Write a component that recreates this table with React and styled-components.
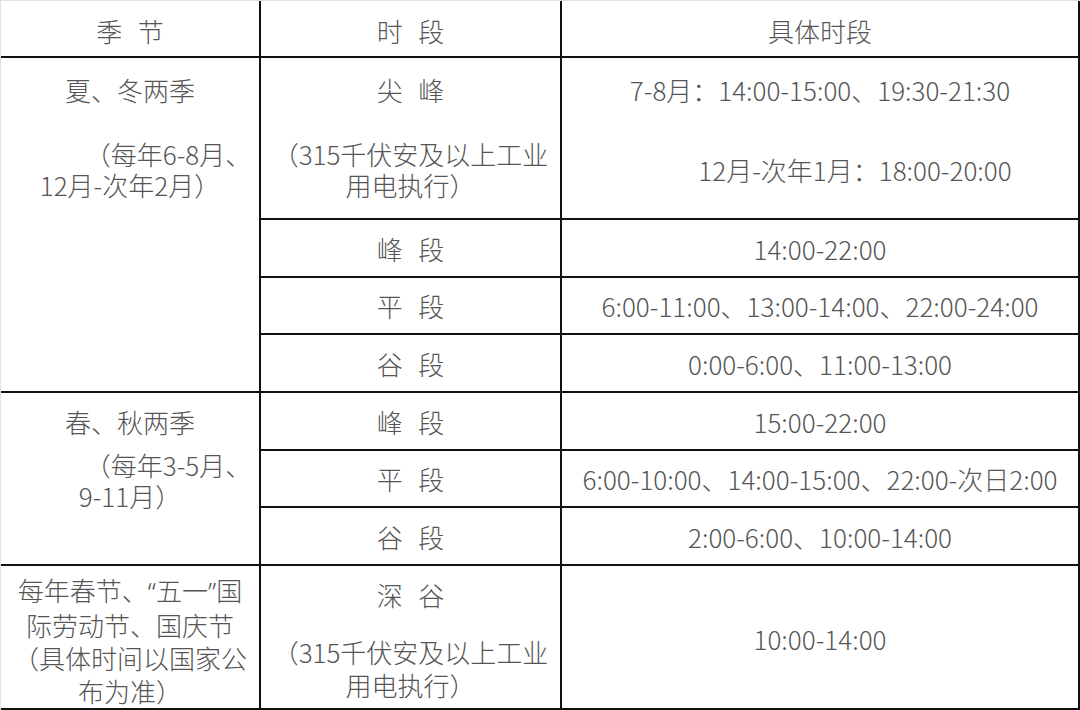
import React from 'react';
import styled, { createGlobalStyle } from 'styled-components';

const Global = createGlobalStyle`
  html, body { margin: 0; padding: 0; background: #fff; }
  body { font-family: "Noto Sans CJK SC", "Noto Sans", sans-serif; }
`;

const Grid = styled.div`
  display: grid;
  grid-template-columns: 258px 299px 516px;
  grid-template-rows: 55px 160px 56px 55px 56px 56px 55px 56px 142px;
  gap: 2px;
  width: 1080px;
  height: 710px;
  box-sizing: border-box;
  background: #111;
  border-top: 1px solid #e2e2e2;
  border-left: 1px solid #e2e2e2;
  padding: 0 2px 2px 0;
  font-family: "Noto Sans CJK SC", sans-serif;
  font-weight: 300;
  font-size: 26px;
  line-height: 31px;
  color: #555;
`;

const Cell = styled.div`
  grid-column: ${(p) => p.$col};
  grid-row: ${(p) => p.$row} / span ${(p) => p.$span || 1};
  background: #fff;
  display: flex;
  flex-direction: column;
  justify-content: ${(p) => (p.$top ? 'flex-start' : 'center')};
  text-align: center;
  padding-top: ${(p) => p.$pt || 0}px;
  line-height: ${(p) => p.$lh || 31}px;
  box-sizing: border-box;
  min-width: 0;
  overflow: hidden;
`;

const Line = styled.div`
  margin-top: ${(p) => p.$mt || 0}px;
  padding-left: ${(p) => p.$shift || 0}px;
  white-space: nowrap;
`;

const Spaced = styled.span`
  word-spacing: 10px;
`;

const Quote = styled.span`
  font-family: "Noto Sans", "Liberation Sans", sans-serif;
  font-weight: 300;
`;

const single = [
  { row: 3, name: '峰 段', time: '14:00-22:00' },
  { row: 4, name: '平 段', time: '6:00-11:00、13:00-14:00、22:00-24:00' },
  { row: 5, name: '谷 段', time: '0:00-6:00、11:00-13:00' },
  { row: 6, name: '峰 段', time: '15:00-22:00' },
  { row: 7, name: '平 段', time: '6:00-10:00、14:00-15:00、22:00-次日2:00' },
  { row: 8, name: '谷 段', time: '2:00-6:00、10:00-14:00' },
];

export default function App() {
  return (
    <>
      <Global />
      <Grid>
        <Cell $col={1} $row={1} $pt={3}>
          <Line><Spaced>季 节</Spaced></Line>
        </Cell>
        <Cell $col={2} $row={1} $pt={3}>
          <Line><Spaced>时 段</Spaced></Line>
        </Cell>
        <Cell $col={3} $row={1} $pt={3}>
          <Line>具体时段</Line>
        </Cell>

        <Cell $col={1} $row={2} $span={4} $top $pt={16}>
          <Line>夏、冬两季</Line>
          <Line $mt={33} $shift={76}>（每年6-8月、</Line>
          <Line>12月-次年2月）</Line>
        </Cell>
        <Cell $col={2} $row={2} $top $pt={16}>
          <Line><Spaced>尖 峰</Spaced></Line>
          <Line $mt={33}>（315千伏安及以上工业</Line>
          <Line>用电执行）</Line>
        </Cell>
        <Cell $col={3} $row={2} $top $pt={16}>
          <Line>7-8月：14:00-15:00、19:30-21:30</Line>
          <Line $mt={49} $shift={70}>12月-次年1月：18:00-20:00</Line>
        </Cell>

        <Cell $col={1} $row={6} $span={3} $top $pt={13}>
          <Line>春、秋两季</Line>
          <Line $mt={12} $shift={76}>（每年3-5月、</Line>
          <Line>9-11月）</Line>
        </Cell>

        {single.map((r) => (
          <React.Fragment key={r.row}>
            <Cell $col={2} $row={r.row}>
              <Line><Spaced>{r.name}</Spaced></Line>
            </Cell>
            <Cell $col={3} $row={r.row}>
              <Line>{r.time}</Line>
            </Cell>
          </React.Fragment>
        ))}

        <Cell $col={1} $row={9} $lh={33} $pt={5}>
          <Line>每年春节、<Quote>“</Quote>五一<Quote>”</Quote>国</Line>
          <Line>际劳动节、国庆节</Line>
          <Line>（具体时间以国家公</Line>
          <Line>布为准）</Line>
        </Cell>
        <Cell $col={2} $row={9} $lh={33} $pt={5}>
          <Line><Spaced>深 谷</Spaced></Line>
          <Line $mt={24}>（315千伏安及以上工业</Line>
          <Line>用电执行）</Line>
        </Cell>
        <Cell $col={3} $row={9} $pt={2}>
          <Line>10:00-14:00</Line>
        </Cell>
      </Grid>
    </>
  );
}
